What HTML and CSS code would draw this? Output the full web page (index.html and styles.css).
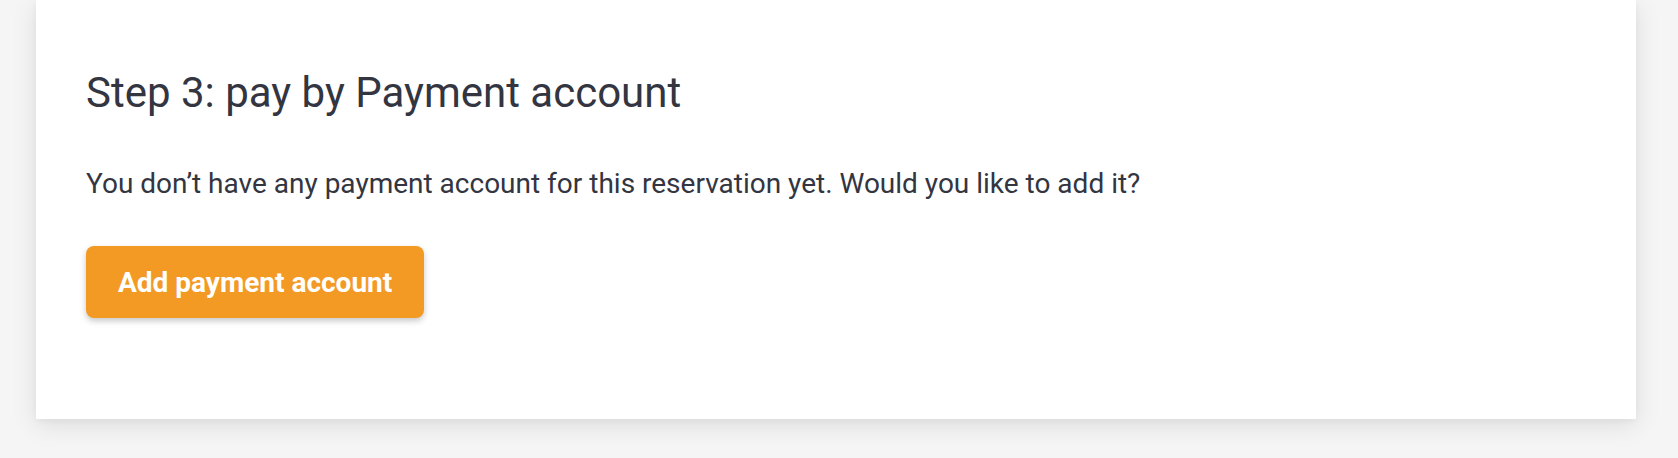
FILE: index.html
```html
<!DOCTYPE html>
<html lang="en">
<head>
<meta charset="utf-8">
<title>Step 3: pay by Payment account</title>
<link rel="stylesheet" href="styles.css">
</head>
<body>
<main class="page">
  <section class="card">
    <h2 class="card-title">Step 3: pay by Payment account</h2>
    <p class="card-text">You don’t have any payment account for this reservation yet. Would you like to add it?</p>
    <button class="btn-primary" type="button">Add payment account</button>
  </section>
</main>
</body>
</html>
```

FILE: styles.css
```css
html, body {
  margin: 0;
  padding: 0;
  background: #f5f5f5;
  height: 100%;
  overflow: hidden;
}

body {
  font-family: Roboto, "Liberation Sans", Arial, sans-serif;
  color: #333541;
}

.page {
  padding: 0 42px 38px 36px;
}

.card {
  background: #ffffff;
  box-shadow: 0 6px 24px rgba(0, 0, 0, 0.10), 0 2px 6px rgba(0, 0, 0, 0.04);
  padding: 68px 50px 101px 50px;
  display: flex;
  flex-direction: column;
  align-items: flex-start;
}

.card-title {
  margin: 0;
  font-size: 42px;
  line-height: 50px;
  font-weight: 400;
  color: #333541;
}

.card-text {
  margin: 45px 0 0 0;
  font-size: 28px;
  line-height: 42px;
  color: #333541;
}

.btn-primary {
  margin-top: 41px;
  height: 72px;
  padding: 0 32px;
  border: none;
  border-radius: 8px;
  background: #f39a25;
  color: #ffffff;
  font-family: Roboto, "Liberation Sans", Arial, sans-serif;
  font-size: 28px;
  font-weight: 700;
  box-shadow: 0 3px 6px rgba(0, 0, 0, 0.22);
  cursor: pointer;
}
```
